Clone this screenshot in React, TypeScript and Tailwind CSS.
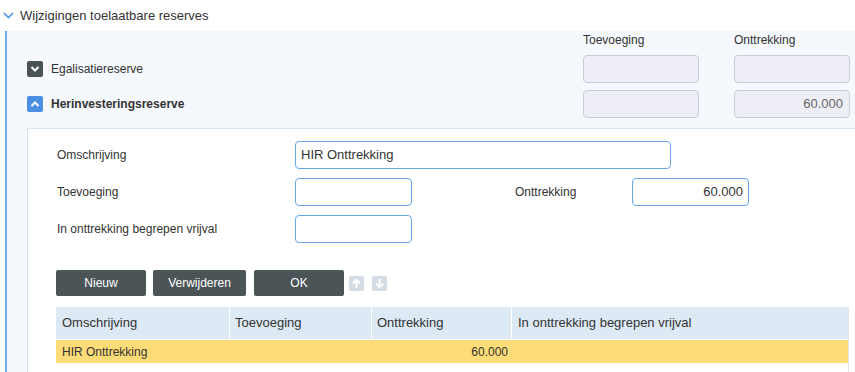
import React from 'react';

const inputBlue = 'h-[28px] border border-[#6aa7ea] rounded-[4px] bg-white px-[5px] text-[13px] text-[#333] flex items-center';
const inputGray = 'h-[28px] w-[116px] border border-[#c9ccd6] rounded-[4px] bg-[#eeeff6] px-[6px] text-[13px] text-[#666] flex items-center justify-end';

function ChevronBox({ open }: { open: boolean }) {
  return (
    <div
      className={`w-[16px] h-[16px] rounded-[2px] flex items-center justify-center ${
        open ? 'bg-[#4a8fe2]' : 'bg-[#4a5356]'
      }`}
    >
      <svg width="10" height="6" viewBox="0 0 10 6">
        <path
          d={open ? 'M1.5 5L5 1.5L8.5 5' : 'M1.5 1L5 4.5L8.5 1'}
          fill="none"
          stroke="white"
          strokeWidth="2"
        />
      </svg>
    </div>
  );
}

function ArrowBtn({ up }: { up: boolean }) {
  return (
    <div className="w-[15px] h-[15px] rounded-[2px] bg-[#d3dbe4] flex items-center justify-center">
      <svg width="11" height="11" viewBox="0 0 11 11">
        {up ? (
          <path d="M5.5 10V2M1.8 5.5L5.5 1.8L9.2 5.5" fill="none" stroke="white" strokeWidth="2" />
        ) : (
          <path d="M5.5 1V9M1.8 5.5L5.5 9.2L9.2 5.5" fill="none" stroke="white" strokeWidth="2" />
        )}
      </svg>
    </div>
  );
}

export default function App() {
  const reserves = [
    { name: 'Egalisatiereserve', open: false, toev: '', ontt: '' },
    { name: 'Herinvesteringsreserve', open: true, toev: '', ontt: '60.000' },
  ];

  return (
    <div className="w-[855px] h-[372px] overflow-hidden bg-white flex flex-col font-['Liberation_Sans',Arial,sans-serif] text-[#333]">
      {/* Header */}
      <div className="h-[31px] flex items-center flex-shrink-0">
        <svg className="ml-[3px]" width="11" height="7" viewBox="0 0 11 7">
          <path d="M1 1.2L5.5 5.6L10 1.2" fill="none" stroke="#5b9be6" strokeWidth="1.8" />
        </svg>
        <span className="ml-[6px] text-[13px] text-[#333]">Wijzigingen toelaatbare reserves</span>
      </div>

      {/* Section */}
      <div className="flex-1 ml-[5px] border-l-2 border-[#6aaaf0] bg-[#f5f8fd] flex flex-col">
        <div className="pl-[20px] pr-[5px]">
          <div className="pt-[2px] h-[16px] flex text-[12px] leading-[14px]">
            <div className="ml-auto flex gap-[35px]">
              <span className="w-[116px]">Toevoeging</span>
              <span className="w-[116px]">Onttrekking</span>
            </div>
          </div>
          <div className="mt-[8px] flex flex-col gap-[7px]">
            {reserves.map((r) => (
              <div key={r.name} className="h-[28px] flex items-center">
                <ChevronBox open={r.open} />
                <span className={`ml-[8px] text-[12px] ${r.open ? 'font-bold' : ''}`}>{r.name}</span>
                <div className="ml-auto flex gap-[35px]">
                  <div className={inputGray}>{r.toev}</div>
                  <div className={inputGray}>{r.ontt}</div>
                </div>
              </div>
            ))}
          </div>
        </div>

        {/* Inner panel */}
        <div className="flex-1 mt-[10px] ml-[20px] bg-white border-t border-l border-[#d9e4f3] pt-[12px]">
          <div className="pl-[29px] flex flex-col gap-[9px] text-[12px]">
            <div className="flex items-center">
              <span className="w-[238px]">Omschrijving</span>
              <div className={`${inputBlue} w-[376px]`}>HIR Onttrekking</div>
            </div>
            <div className="flex items-center">
              <span className="w-[238px]">Toevoeging</span>
              <div className={`${inputBlue} w-[117px]`}></div>
              <span className="ml-[103px] w-[117px]">Onttrekking</span>
              <div className={`${inputBlue} w-[117px] justify-end`}>60.000</div>
            </div>
            <div className="flex items-center">
              <span className="w-[238px]">In onttrekking begrepen vrijval</span>
              <div className={`${inputBlue} w-[117px]`}></div>
            </div>
          </div>

          {/* Buttons */}
          <div className="pl-[28px] mt-[27px] flex items-center">
            <button className="w-[90px] h-[26px] rounded-[2px] bg-[#4b5558] text-white text-[12px]">Nieuw</button>
            <button className="ml-[7px] w-[93px] h-[26px] rounded-[2px] bg-[#4b5558] text-white text-[12px]">Verwijderen</button>
            <button className="ml-[8px] w-[90px] h-[26px] rounded-[2px] bg-[#4b5558] text-white text-[12px]">OK</button>
            <div className="ml-[5px] flex gap-[8px]">
              <ArrowBtn up />
              <ArrowBtn up={false} />
            </div>
          </div>

          {/* Table */}
          <div className="ml-[28px] mt-[11px] w-[793px] border-r border-[#dfe5ee] h-[80px]">
            <div className="w-[792px]">
              <div className="h-[32px] flex bg-[#dde9f5] text-[13px] items-center">
                <div className="w-[174px] pl-[6px] h-full flex items-center border-r border-white">Omschrijving</div>
                <div className="w-[142px] pl-[5px] h-full flex items-center border-r border-white">Toevoeging</div>
                <div className="w-[140px] pl-[5px] h-full flex items-center border-r border-white">Onttrekking</div>
                <div className="flex-1 pl-[6px] h-full flex items-center">In onttrekking begrepen vrijval</div>
              </div>
              <div className="mt-[1px] h-[23px] flex bg-[#fedc78] text-[12px] items-center">
                <div className="w-[175px] pl-[6px]">HIR Onttrekking</div>
                <div className="w-[142px]"></div>
                <div className="w-[139px] text-right pr-[4px]">60.000</div>
                <div className="flex-1"></div>
              </div>
            </div>
          </div>
        </div>
      </div>
    </div>
  );
}
